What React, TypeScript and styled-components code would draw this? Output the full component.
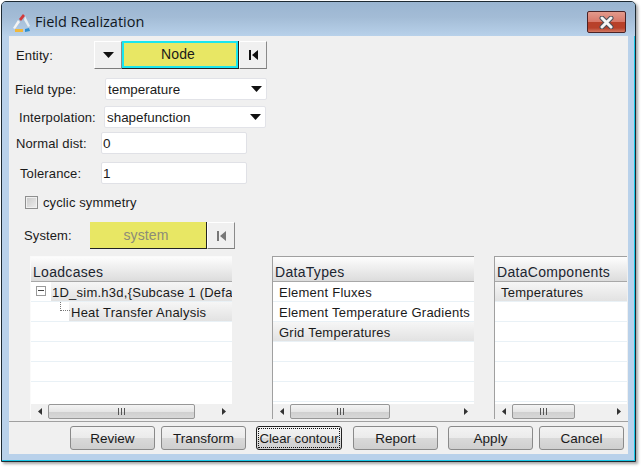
import React from 'react';
import styled, {createGlobalStyle} from 'styled-components';

const GlobalStyle = createGlobalStyle`
  html, body {
    margin: 0;
    padding: 0;
    background: #fff;
  }
  body {
    width: 642px;
    height: 468px;
    overflow: hidden;
    font-family: "Liberation Sans", Arial, sans-serif;
    font-size: 13px;
    color: #1a1a1a;
  }
`

const Window = styled.div`
  box-sizing: border-box;
  width: 635px;
  height: 461px;
  margin: 1px 0 0 1px;
  display: flex;
  flex-direction: column;
  background: #b9d1ea;
  border: 1px solid #1d2a33;
  border-radius: 5px 5px 0 0;
  padding: 0 7px 7px 7px;
  box-shadow: 2px 2px 3px rgba(0,0,0,0.35), inset -1px -1px 0 #19c6e6;
`

const TitleBar = styled.div`
  height: 34px;
  box-sizing: border-box;
  margin: 0 -7px;
  padding: 9px 9px 0 10px;
  flex: none;
  display: flex;
  align-items: flex-start;
  background: linear-gradient(#9ab5d1, #a3bcd6 45%, #b8d1ea);
  border-radius: 4px 4px 0 0;
`

const LogoSlot = styled.span`
  display: flex;
  margin-top: 2px;
`

const TitleText = styled.span`
  font-family: "Open Sans", sans-serif;
  font-size: 14.5px;
  line-height: 22px;
  margin-left: 4px;
  color: #10181f;
  flex: 1;
`

const CloseButton = styled.div`
  box-sizing: border-box;
  width: 39px;
  height: 22px;
  display: flex;
  align-items: center;
  justify-content: center;
  border: 1px solid #4a2326;
  border-radius: 2px;
  background: linear-gradient(#e39a8c, #d8796a 48%, #b8412a 50%, #b8412a 80%, #d27a64);
`

const Client = styled.div`
  flex: 1;
  display: flex;
  flex-direction: column;
  background: #f0f0f0;
  min-height: 0;
`

const Row = styled.div<{$top: number; $left: number; $height?: number}>`
  display: flex;
  align-items: center;
  flex: none;
  margin-top: ${p => p.$top}px;
  padding-left: ${p => p.$left}px;
  ${p => p.$height ? `height: ${p.$height}px;` : ''}
  letter-spacing: 0.12px;
`

const Label = styled.span<{$width: number}>`
  width: ${p => p.$width}px;
  flex: none;
`

const ToolButton = styled.div<{$height?: number}>`
  box-sizing: border-box;
  width: 28px;
  height: ${p => p.$height ?? 28}px;
  display: flex;
  align-items: center;
  justify-content: center;
  background: #f0f0f0;
  border-top: 1px solid #fff;
  border-left: 1px solid #fff;
  border-right: 1px solid #8a8a8a;
  border-bottom: 1px solid #7c7c7c;
`

const EntityButton = styled.div<{$muted?: boolean; $width: number; $height: number}>`
  box-sizing: border-box;
  width: ${p => p.$width}px;
  height: ${p => p.$height}px;
  display: flex;
  align-items: center;
  justify-content: center;
  padding: 0 4px ${p => (p.$muted ? 0 : 2)}px 0;
  font-size: 14px;
  background: #e8e764;
  color: ${p => (p.$muted ? '#8c8c78' : '#1a1a1a')};
  border-right: 1px solid #222;
  border-bottom: 1px solid #222;
  box-shadow: ${p => (p.$muted ? 'none' : 'inset 0 0 0 2px #19e6ee')};
`

const Select = styled.div`
  box-sizing: border-box;
  width: 162px;
  height: 22px;
  display: flex;
  align-items: center;
  justify-content: space-between;
  padding: 0 4px 0 2px;
  font-size: 13.4px;
  letter-spacing: 0;
  background: #fff;
  border: 1px solid #e2e3e8;
  border-radius: 2px;
`

const TextInput = styled.div`
  box-sizing: border-box;
  width: 146px;
  height: 22px;
  display: flex;
  align-items: center;
  padding-left: 1px;
  font-size: 13.5px;
  background: #fff;
  border: 1px solid #e0e1e6;
  border-radius: 2px;
`

const CheckBox = styled.div`
  box-sizing: border-box;
  width: 13px;
  height: 13px;
  margin-right: 5px;
  border: 1px solid #8e8f8f;
  background: linear-gradient(135deg, #c8c8c8, #eee);
  box-shadow: inset 0 0 0 1px #f0f0f0;
`

const Panels = styled.div`
  display: flex;
  margin-top: 7px;
  padding-left: 21px;
  flex: none;
`

const Panel = styled.div<{$width: number; $framed?: boolean; $gap: number}>`
  box-sizing: border-box;
  width: ${p => p.$width}px;
  height: 163px;
  margin-right: ${p => p.$gap}px;
  display: flex;
  flex-direction: column;
  background: #fff;
  border-top: 1px solid ${p => (p.$framed ? '#a0a0a0' : '#fafafa')};
  border-left: 1px solid ${p => (p.$framed ? '#a0a0a0' : '#fafafa')};
`

const PanelHeader = styled.div`
  box-sizing: border-box;
  height: 25px;
  flex: none;
  display: flex;
  align-items: flex-end;
  padding: 0 0 1px 2px;
  font-size: 14px;
  letter-spacing: 0.3px;
  color: #1c2530;
  background: linear-gradient(#fdfdfd, #dcdcdc);
  border-bottom: 1px solid #a8a8a8;
`

const Rows = styled.div`
  flex: 1;
  overflow: hidden;
`

const ListRow = styled.div<{$indent?: number}>`
  box-sizing: border-box;
  height: 20px;
  display: flex;
  align-items: center;
  position: relative;
  padding-left: ${p => p.$indent ?? 0}px;
  border-bottom: 1px solid #e9f1f6;
  white-space: nowrap;
  overflow: hidden;
`

const Cell = styled.span<{$active?: boolean; $pad: number}>`
  flex: 1;
  height: 100%;
  box-sizing: border-box;
  display: flex;
  align-items: center;
  padding: 1px 0 0 ${p => p.$pad}px;
  letter-spacing: 0.24px;
  ${p => p.$active ? 'background: linear-gradient(#f6f6f6, #e2e2e2);' : ''}
`

const TreeBox = styled.span`
  box-sizing: border-box;
  position: absolute;
  left: 5px;
  top: 4px;
  width: 10px;
  height: 10px;
  border: 1px solid #9a9a9a;
  background: linear-gradient(transparent 3px, #444 3px, #444 4px, transparent 4px) no-repeat center / 6px 100%;
`

const TreeLine = styled.span`
  position: absolute;
  left: 29px;
  top: 0;
  width: 9px;
  height: 8px;
  border-left: 1px dotted #777;
  border-bottom: 1px dotted #777;
`

const ScrollBar = styled.div`
  height: 15px;
  flex: none;
  display: flex;
  align-items: center;
  background: #f0f0f0;
`

const ScrollArrow = styled.span`
  width: 17px;
  flex: none;
  display: flex;
  justify-content: center;
`

const ScrollTrack = styled.div`
  flex: 1;
  height: 15px;
`

const ScrollThumb = styled.div<{$width: number}>`
  box-sizing: border-box;
  width: ${p => p.$width}px;
  height: 15px;
  display: flex;
  align-items: center;
  justify-content: center;
  gap: 2px;
  border: 1px solid #979797;
  border-radius: 2px;
  background: linear-gradient(#f4f4f4, #e6e6e6 50%, #cfcfcf 52%, #d8d8d8);
`

const Grip = styled.i`
  width: 1px;
  height: 7px;
  background: #555;
`

const Footer = styled.div`
  flex: none;
  margin-top: 2px;
  height: 32px;
  box-sizing: border-box;
  border-top: 1px solid #a0a0a0;
  display: flex;
  align-items: flex-start;
  padding: 4px 0 0 61px;
`

const FooterButton = styled.div<{$gap: number; $focused?: boolean}>`
  box-sizing: border-box;
  width: ${p => (p.$focused ? 86 : 85)}px;
  height: 24px;
  margin-right: ${p => p.$gap}px;
  display: flex;
  align-items: center;
  justify-content: center;
  font-size: ${p => (p.$focused ? 13.2 : 13.5)}px;
  white-space: nowrap;
  border: 1px solid ${p => (p.$focused ? '#222' : '#8a8a8a')};
  border-radius: 3px;
  background: linear-gradient(#f3f3f3, #ebebeb 48%, #d9d9d9 52%, #cfcfcf);
  ${p => p.$focused ? 'outline: 1px dotted #111; outline-offset: -3px;' : ''}
`

const Logo = () => (
  <svg width="19" height="20" viewBox="0 0 19 20">
    <path d="M7 6 L11 1 L13 3 L9 8 Z" fill="#d23a3a" />
    <path d="M6 7 L1 15 L3 16 L8 9 Z" fill="#f4f4f4" />
    <path d="M13 3 L18 13 L16 14 L12 7 Z" fill="#e8eef2" />
    <path d="M3 16 L11 16 L11 19 L3 19 Z" fill="#f0b83c" />
    <path d="M13 16 L17 15 L18 18 L13 19 Z" fill="#2f8fd0" />
  </svg>
)

const CloseIcon = () => (
  <svg width="15" height="13" viewBox="0 0 15 13">
    <path d="M3 2 L12 11 M12 2 L3 11" stroke="#4a4f58" strokeWidth="5" strokeLinecap="round" />
    <path d="M3 2 L12 11 M12 2 L3 11" stroke="#f6f6f6" strokeWidth="3" strokeLinecap="round" />
  </svg>
)

const DownArrow = () => (
  <svg width="11" height="6" viewBox="0 0 11 6">
    <path d="M0 0 H11 L5.5 6 Z" fill="#111" />
  </svg>
)

const SkipIcon = ({color}: {color: string}) => (
  <svg width="9" height="10" viewBox="0 0 9 10">
    <path d="M0 0 H2 V10 H0 Z M9 0 V10 L3 5 Z" fill={color} />
  </svg>
)

const ScrollLeft = () => (
  <svg width="4" height="7" viewBox="0 0 4 7"><path d="M4 0 V7 L0 3.5 Z" fill="#333" /></svg>
)

const ScrollRight = () => (
  <svg width="4" height="7" viewBox="0 0 4 7"><path d="M0 0 V7 L4 3.5 Z" fill="#333" /></svg>
)

type ListItem = {
  text: string,
  active?: boolean,
}

type ListProps = {
  title: string,
  width: number,
  gap: number,
  thumb: number,
  items: ListItem[],
}

const lists: ListProps[] = [
  {
    title: 'DataTypes',
    width: 202,
    gap: 20,
    thumb: 100,
    items: [
      {text: 'Element Fluxes'},
      {text: 'Element Temperature Gradients'},
      {text: 'Grid Temperatures', active: true},
    ],
  },
  {
    title: 'DataComponents',
    width: 133,
    gap: 0,
    thumb: 63,
    items: [{text: 'Temperatures', active: true}],
  },
]

const buttons = [
  {label: 'Review', gap: 6},
  {label: 'Transform', gap: 10},
  {label: 'Clear contour', gap: 11, focused: true},
  {label: 'Report', gap: 10},
  {label: 'Apply', gap: 6},
  {label: 'Cancel', gap: 0},
]

const Scroller = ({thumb}: {thumb: number}) => (
  <ScrollBar>
    <ScrollArrow><ScrollLeft /></ScrollArrow>
    <ScrollTrack>
      <ScrollThumb $width={thumb}><Grip /><Grip /><Grip /></ScrollThumb>
    </ScrollTrack>
    <ScrollArrow><ScrollRight /></ScrollArrow>
  </ScrollBar>
)

const App: React.FC = () => {
  return (
    <Window>
      <GlobalStyle />
      <TitleBar>
        <LogoSlot><Logo /></LogoSlot>
        <TitleText>Field Realization</TitleText>
        <CloseButton><CloseIcon /></CloseButton>
      </TitleBar>
      <Client>
        <Row $top={5} $left={7}>
          <Label $width={78}>Entity:</Label>
          <ToolButton><DownArrow /></ToolButton>
          <EntityButton $width={117} $height={28}>Node</EntityButton>
          <ToolButton><SkipIcon color="#111" /></ToolButton>
        </Row>
        <Row $top={9} $left={6}>
          <Label $width={90}>Field type:</Label>
          <Select>temperature<DownArrow /></Select>
        </Row>
        <Row $top={6} $left={10}>
          <Label $width={85}>Interpolation:</Label>
          <Select>shapefunction<DownArrow /></Select>
        </Row>
        <Row $top={4} $left={7}>
          <Label $width={85}>Normal dist:</Label>
          <TextInput>0</TextInput>
        </Row>
        <Row $top={8} $left={11}>
          <Label $width={81}>Tolerance:</Label>
          <TextInput>1</TextInput>
        </Row>
        <Row $top={12} $left={16} $height={13}>
          <CheckBox />
          <span>cyclic symmetry</span>
        </Row>
        <Row $top={13} $left={15}>
          <Label $width={66}>System:</Label>
          <EntityButton $muted $width={117} $height={27}>system</EntityButton>
          <ToolButton $height={27}><SkipIcon color="#777" /></ToolButton>
        </Row>
        <Panels>
          <Panel $width={202} $gap={40}>
            <PanelHeader>Loadcases</PanelHeader>
            <Rows>
              <ListRow $indent={20}>
                <TreeBox />
                <Cell $active $pad={1}>1D_sim.h3d,{'{'}Subcase 1 (Defa</Cell>
              </ListRow>
              <ListRow $indent={38}>
                <TreeLine />
                <Cell $active $pad={2}>Heat Transfer Analysis</Cell>
              </ListRow>
              {[0, 1, 2].map(i => <ListRow key={i} />)}
            </Rows>
            <Scroller thumb={147} />
          </Panel>
          {lists.map(list => (
            <Panel key={list.title} $width={list.width} $gap={list.gap} $framed>
              <PanelHeader>{list.title}</PanelHeader>
              <Rows>
                {list.items.map(item => (
                  <ListRow key={item.text}>
                    <Cell $active={item.active} $pad={6}>{item.text}</Cell>
                  </ListRow>
                ))}
                {Array.from({length: 6 - list.items.length}).map((_, i) => <ListRow key={i} />)}
              </Rows>
              <Scroller thumb={list.thumb} />
            </Panel>
          ))}
        </Panels>
        <Footer>
          {buttons.map(b => (
            <FooterButton key={b.label} $gap={b.gap} $focused={b.focused}>{b.label}</FooterButton>
          ))}
        </Footer>
      </Client>
    </Window>
  )
}

export default App;
